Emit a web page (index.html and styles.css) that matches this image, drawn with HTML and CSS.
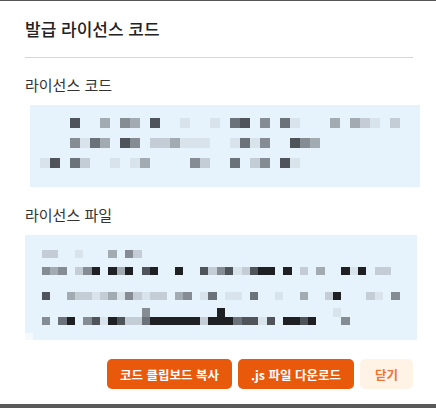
FILE: index.html
```html
<!DOCTYPE html>
<html lang="ko">
<head>
    <meta charset="UTF-8">
    <meta name="viewport" content="width=device-width, initial-scale=1.0">
    <title>발급 라이선스 코드</title>
    <link rel="stylesheet" href="styles.css">
</head>
<body>
    <div class="dialog">
        <div class="dialog-head">
            <h2 class="dialog-title">발급 라이선스 코드</h2>
        </div>
        <div class="field">
            <div class="field-label">라이선스 코드</div>
            <div class="blur-box code-box" id="code-box"></div>
        </div>
        <div class="field">
            <div class="field-label">라이선스 파일</div>
            <div class="blur-box file-box" id="file-box"></div>
        </div>
        <div class="dialog-foot">
            <button class="btn btn-primary">코드 클립보드 복사</button>
            <button class="btn btn-primary">.js 파일 다운로드</button>
            <button class="btn btn-light">닫기</button>
        </div>
    </div>
    <!-- page behind the dialog, only its top edge shows -->
    <div class="page-under">
        <span class="under-a">Evaluation</span>
        <span class="under-b">2024-12-22</span>
    </div>
    <script src="mosaic.js"></script>
</body>
</html>
```

FILE: styles.css
```css
html, body {
    margin: 0;
    background: #fff;
}
body {
    font-family: "Noto Sans CJK KR", "Noto Sans", sans-serif;
    color: #333;
    height: 408px;
    overflow: hidden;
}
.dialog {
    border-top: 1px solid #555;
    padding: 16px 23px 15px 25px;
    background: #fff;
}
.dialog-head {
    padding-bottom: 16px;
    border-bottom: 1px solid #d6d6da;
}
.dialog-title {
    margin: 0;
    font-size: 17px;
    line-height: 24px;
    font-weight: 500;
    color: #222;
}
.field-label {
    margin-top: 16px;
    margin-bottom: 9px;
    font-size: 15px;
    line-height: 22px;
    color: #333;
}
.field + .field .field-label {
    margin-top: 17px;
}
.blur-box {
    background: #e6f3fd;
    box-sizing: border-box;
    overflow: hidden;
}
.code-box {
    margin-left: 5px;
    width: 390px;
    height: 82px;
    padding: 13px 0 0 10px;
}
.file-box {
    width: 392px;
    height: 105px;
    padding-top: 15px;
}
.px-row {
    display: flex;
}
.px {
    flex: none;
}
.code-box .px-row { height: 10px; }
.code-box .px { width: 10px; }
.file-box .px-row { height: calc(25px / 3); }
.file-box .px { width: calc(25px / 3); }

.px-v { background: #d9e3ec; }
.px-l { background: #c4cdd6; }
.px-g { background: #a2aab2; }
.px-m { background: #868c94; }
.px-n { background: #6c7279; }
.px-d { background: #4f545b; }
.px-b { background: #1e2024; }
.px-w { background: #f5faff; }

.dialog-foot {
    margin-top: 19px;
    display: flex;
    justify-content: flex-end;
    gap: 6px;
}
.btn {
    height: 30px;
    padding: 0 13px;
    border: none;
    border-radius: 5px;
    font-family: inherit;
    font-size: 12.5px;
    font-weight: 700;
    cursor: pointer;
}
.btn-primary {
    background: #e8590c;
    color: #fff;
}
.btn-light {
    padding: 0 15px;
    background: #fff3e6;
    color: #ef7430;
}
.page-under {
    height: 4px;
    overflow: hidden;
    background: #5a5a5a;
    color: #d8d8d8;
    font-family: "Liberation Sans", Arial, sans-serif;
    font-size: 13px;
    line-height: 15px;
    padding-top: 1px;
    box-sizing: border-box;
    display: flex;
}
.under-a { margin-left: 118px; }
.under-b { margin-left: 46px; }
```

FILE: mosaic.js
```js
// redacted license text, drawn as a pixel mosaic
// . = empty, v/l/g/m/n/d/b = light -> dark, w = white
const codeRows = [
    '...d..g.mg.d..v..v.nd.m.nv...g.glv.l',
    '',
    '...mvng.dm.llgvvv..vnvm..dmg',
    '',
    'vd.nl..v.vg....ml..n.lm.dv'
];
const fileRows = [
    '..ll..v...g.ml',
    '',
    '..mgm.lmb.bgb.db..b..dlmdvldbb.b.l.g..bvb.ll',
    '',
    '',
    '..d..gllvlgvmlvll.gm.vn.vv.n..v..g..lb...lv.m',
    '',
    '..............m........b.............v',
    '..m.nb.mdvbdllnbbbbbblbbbnddvd.bbdb...m',
    '',
    'w'
];

function paintMosaic(el, rows) {
    rows.forEach(r => {
        const row = document.createElement('div');
        row.className = 'px-row';
        for (const ch of r) {
            const cell = document.createElement('span');
            cell.className = ch === '.' ? 'px' : 'px px-' + ch;
            row.appendChild(cell);
        }
        el.appendChild(row);
    });
}

paintMosaic(document.getElementById('code-box'), codeRows);
paintMosaic(document.getElementById('file-box'), fileRows);
```
